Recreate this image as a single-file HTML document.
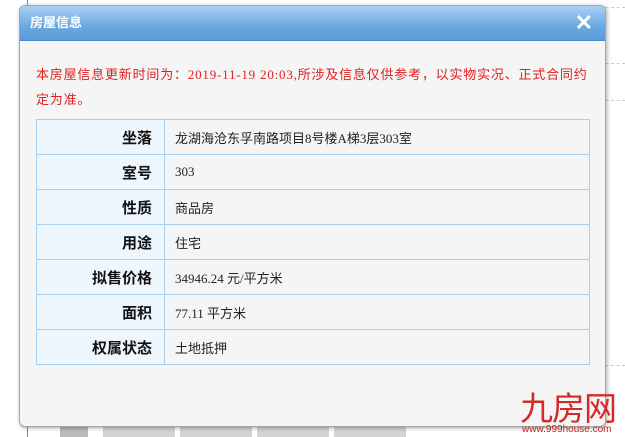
<!DOCTYPE html>
<html><head><meta charset="utf-8"><style>
body{margin:0;width:625px;height:437px;background:#fff;position:relative;overflow:hidden;font-family:"Liberation Serif","Noto Sans CJK SC",sans-serif}
.bgl{position:absolute;left:27px;top:0;width:1px;height:437px;background:#888}
.dots{position:absolute;left:600px;width:25px;border-top:1px dashed #ccc}
.tabs{position:absolute;top:422px;height:15px;background:#d4d4d4}
.dlg{position:absolute;left:19px;top:5px;width:585px;height:420px;background:#f5f5f5;border:1px solid #9aa;border-radius:6px;box-shadow:1px 1px 4px rgba(0,0,0,.35);overflow:hidden}
.hd{height:34px;background:linear-gradient(#a9d1f4,#6aa8e0 60%,#5b9bd8);border-bottom:1px solid #4a8acc;color:#fff;font-size:13px;font-weight:bold;line-height:34px;padding-left:10px}
.x{position:absolute;right:12px;top:4px;color:#fff;font-size:22px;font-weight:bold;line-height:26px;font-family:"Liberation Sans",sans-serif}
.msg{position:absolute;left:16px;top:56px;width:570px;color:#e02020;font-size:13px;line-height:25px;letter-spacing:0.8px;white-space:nowrap}
table{position:absolute;left:16px;top:113px;width:554px;border-collapse:collapse}
td{border:1px solid #a8d0ee;height:34px;padding:0;font-size:13px;color:#222}
td.l{width:115px;background:#eef6fd;text-align:right;padding-right:12px;font-weight:bold;font-size:15px;color:#111}
td.v{padding-left:10px}
.logo{position:absolute;left:520px;top:390px;color:#d42a2a;font-size:33px;font-weight:normal;letter-spacing:-1px;line-height:32px;font-family:"Noto Sans CJK SC",sans-serif}
.url{position:absolute;left:522px;top:424px;color:#c82020;font-size:10px;font-family:"Liberation Sans",sans-serif}
</style></head><body>
<div class="bgl"></div>
<div class="dots" style="top:7px"></div><div class="dots" style="top:63px"></div><div class="dots" style="top:100px"></div><div class="dots" style="top:365px"></div>
<div class="tabs" style="left:60px;width:28px;background:#bbb"></div>
<div class="tabs" style="left:103px;width:72px"></div>
<div class="tabs" style="left:180px;width:72px"></div>
<div class="tabs" style="left:257px;width:72px"></div>
<div class="tabs" style="left:334px;width:72px"></div>
<div class="dlg">
<div class="hd">房屋信息</div><div class="x">✕</div>
<div class="msg">本房屋信息更新时间为：2019-11-19 20:03,所涉及信息仅供参考，以实物实况、正式合同约<br>定为准。</div>
<table>
<tr><td class="l">坐落</td><td class="v">龙湖海沧东孚南路项目8号楼A梯3层303室</td></tr>
<tr><td class="l">室号</td><td class="v">303</td></tr>
<tr><td class="l">性质</td><td class="v">商品房</td></tr>
<tr><td class="l">用途</td><td class="v">住宅</td></tr>
<tr><td class="l">拟售价格</td><td class="v">34946.24 元/平方米</td></tr>
<tr><td class="l">面积</td><td class="v">77.11 平方米</td></tr>
<tr><td class="l">权属状态</td><td class="v">土地抵押</td></tr>
</table>
</div>
<div class="logo">九房网</div>
<div class="url">www.999house.com</div>
</body></html>
